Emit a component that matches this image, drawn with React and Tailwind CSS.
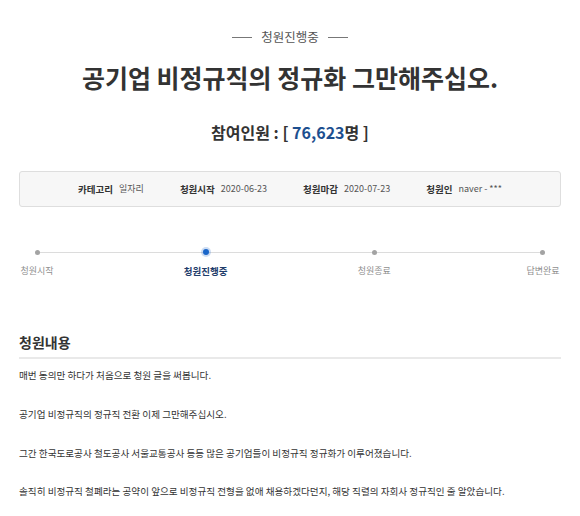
import React from 'react';

const font = { fontFamily: '"Noto Sans CJK KR", "Noto Sans", sans-serif' };

function InfoItem({ label, value }) {
    return (
        <div className="flex items-center gap-[6px] whitespace-nowrap">
            <span className="font-bold text-[#333] text-[9.5px]">{label}</span>
            <span className="text-[#555] text-[9px]">{value}</span>
        </div>
    );
}

function Step({ label, active }) {
    return (
        <div className="w-[36px] flex flex-col items-center">
            <div className="h-[10px] flex items-center justify-center">
                {active ? (
                    <span className="block w-[6px] h-[6px] rounded-full bg-[#1a66c9] shadow-[0_0_0_2px_rgba(26,102,201,0.22)]" />
                ) : (
                    <span className="block w-[5px] h-[5px] rounded-full bg-[#a3a3a3]" />
                )}
            </div>
            <span
                className={`mt-[7px] leading-[14px] whitespace-nowrap ${active ? 'font-bold text-[#1f3d6b] text-[9.5px]' : 'text-[#8f8f8f] text-[9px]'}`}
            >
                {label}
            </span>
        </div>
    );
}

export default function App() {
    const steps = [
        { label: '청원시작' },
        { label: '청원진행중', active: true },
        { label: '청원종료' },
        { label: '답변완료' },
    ];

    const paragraphs = [
        '매번 동의만 하다가 처음으로 청원 글을 써봅니다.',
        '공기업 비정규직의 정규직 전환 이제 그만해주십시오.',
        '그간 한국도로공사 철도공사 서울교통공사 등등 많은 공기업들이 비정규직 정규화가 이루어졌습니다.',
        '솔직히 비정규직 철폐라는 공약이 앞으로 비정규직 전형을 없애 채용하겠다던지, 해당 직렬의 자회사 정규직인 줄 알았습니다.',
    ];

    return (
        <div className="w-[580px] h-[516px] bg-white overflow-hidden px-[19px] pt-[29px]" style={font}>
            <div className="flex items-center justify-center gap-[9px] text-[12.5px] leading-[16px] text-[#555]">
                <span className="block w-[20px] h-px bg-[#777]" />
                <span>청원진행중</span>
                <span className="block w-[20px] h-px bg-[#777]" />
            </div>

            <h1 className="mt-[17px] text-center text-[25px] leading-[30px] font-bold text-[#333]">
                공기업 비정규직의 정규화 그만해주십오.
            </h1>

            <p className="mt-[29px] text-center text-[16px] leading-[22px] font-bold text-[#333]">
                참여인원 : [ <span className="text-[#1d4f8f]">76,623</span>명 ]
            </p>

            <div className="mt-[28px] h-[36px] rounded-[3px] border border-[#dedede] bg-[#f7f7f7] flex items-center justify-center gap-[36px]">
                <InfoItem label="카테고리" value="일자리" />
                <InfoItem label="청원시작" value="2020-06-23" />
                <InfoItem label="청원마감" value="2020-07-23" />
                <InfoItem label="청원인" value="naver - ***" />
            </div>

            <div className="relative mt-[40px]">
                <div className="absolute left-[18px] right-[18px] top-[5px] h-px bg-[#dcdcdc]" />
                <div className="relative flex justify-between">
                    {steps.map((s, i) => (
                        <Step key={i} label={s.label} active={s.active} />
                    ))}
                </div>
            </div>

            <h2 className="mt-[54px] pb-[5px] border-b-2 border-[#e9e9e9] text-[14px] leading-[20px] font-bold text-[#333]">
                청원내용
            </h2>

            <div className="pt-[7px] flex flex-col gap-[19.4px] text-[9.6px] leading-[19.4px] text-[#333]">
                {paragraphs.map((p, i) => (
                    <p key={i} className="whitespace-nowrap">{p}</p>
                ))}
            </div>
        </div>
    );
}
